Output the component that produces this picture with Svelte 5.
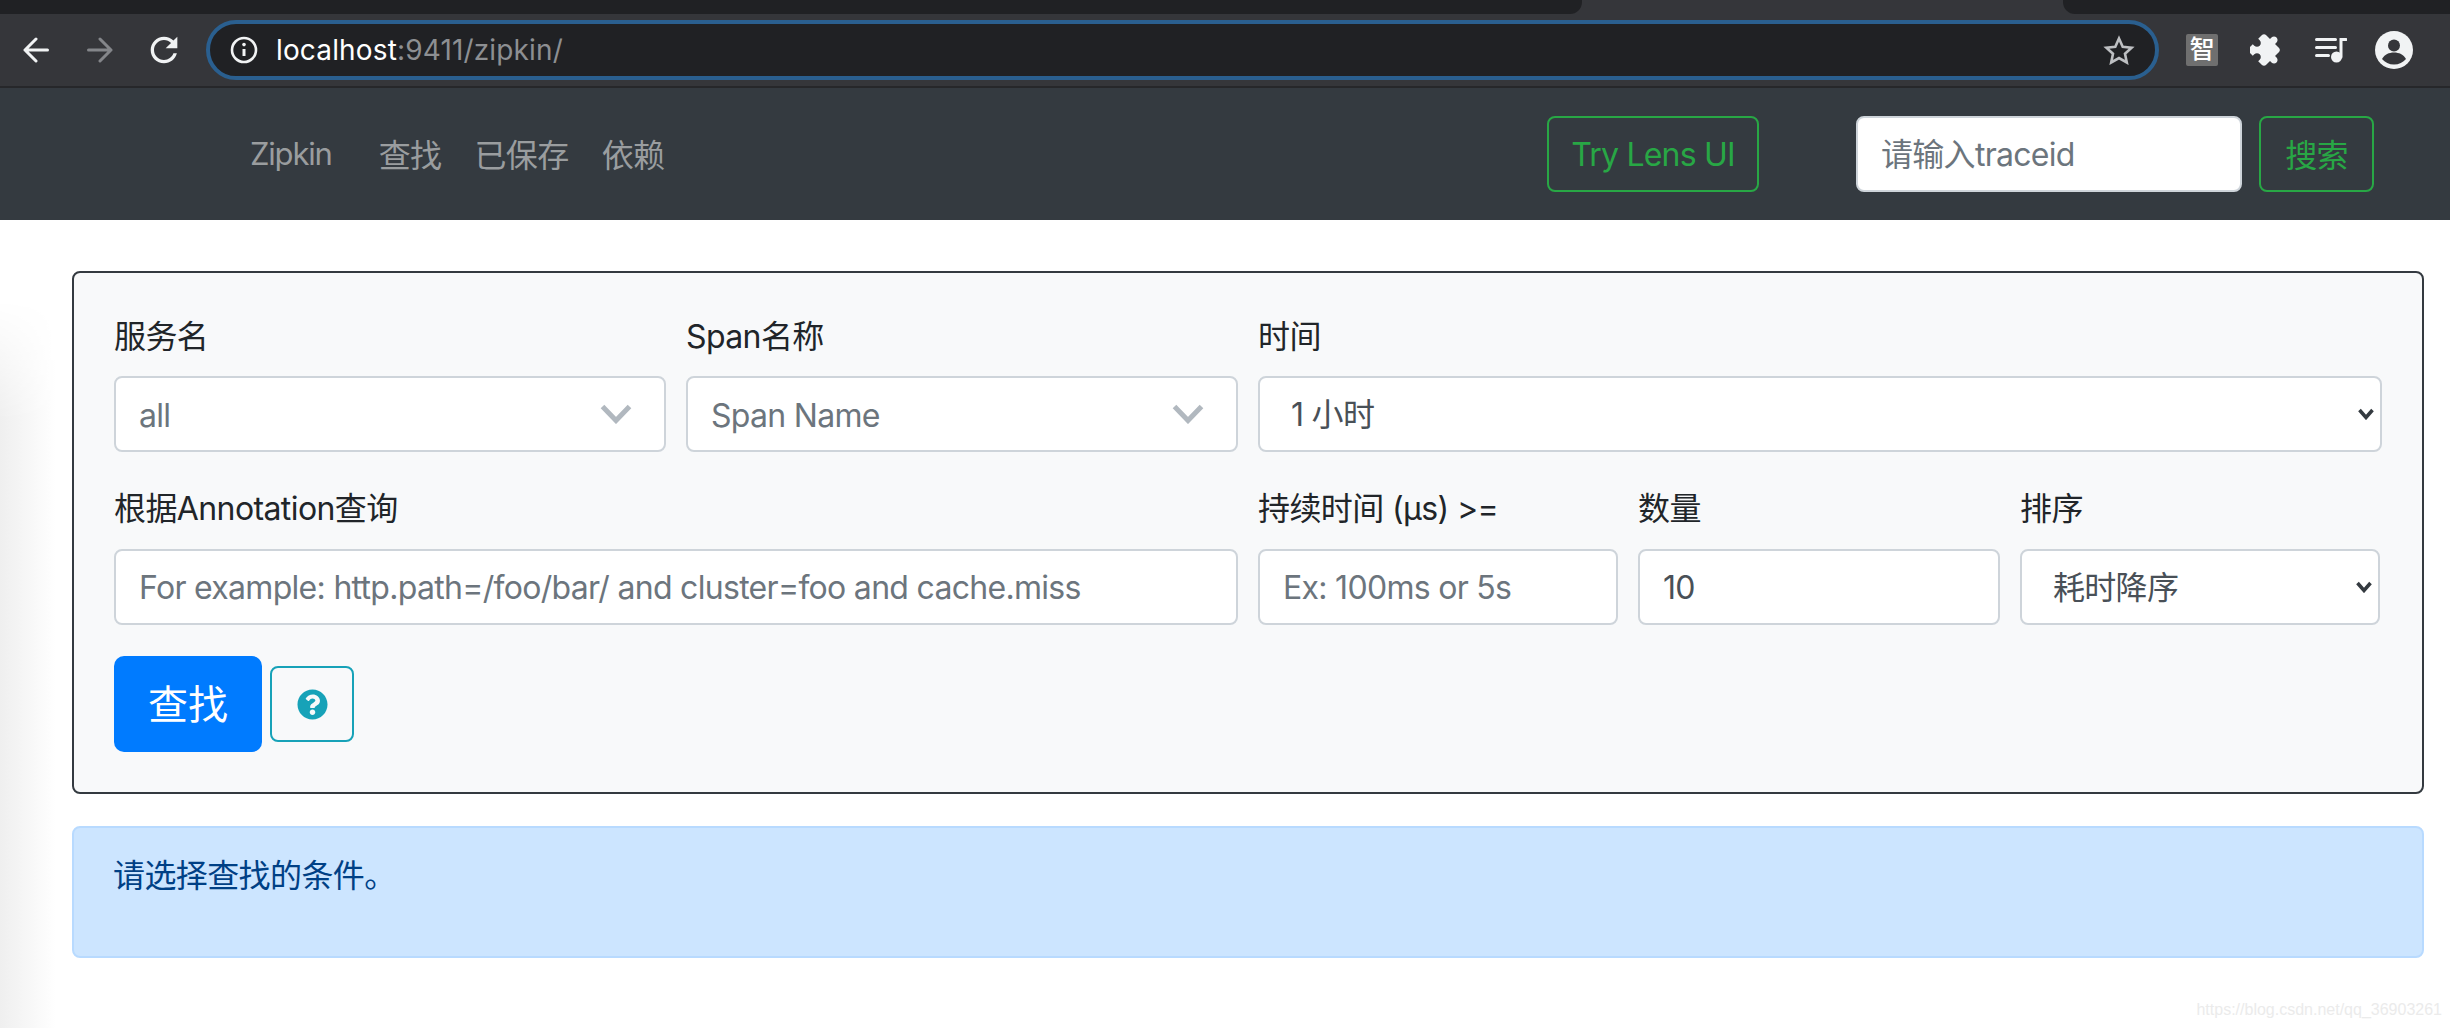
<!--
  Zipkin search page as seen inside a dark Chrome window.
-->
<script>
  const links = ['查找', '已保存', '依赖']
</script>

<div class="shade" aria-hidden="true"></div>

<div class="tabstrip">
  <div class="tab-dark left"></div>
  <div class="tab-dark right"></div>
</div>

<header class="toolbar">
  <svg class="tool back" width="26" height="26" viewBox="0 0 26 26" aria-hidden="true">
    <path d="M24.5 13H2M13 2 2 13l11 11" />
  </svg>
  <svg class="tool fwd" width="26" height="26" viewBox="0 0 26 26" aria-hidden="true">
    <path d="M1.5 13H24M13 2l11 11-11 11" />
  </svg>
  <svg class="reload" width="40" height="40" viewBox="0 0 24 24" aria-hidden="true">
    <path d="M17.65 6.35C16.2 4.9 14.21 4 12 4c-4.42 0-7.99 3.58-7.99 8s3.57 8 7.99 8c3.73 0 6.84-2.55 7.73-6h-2.08c-.82 2.33-3.04 4-5.65 4-3.31 0-6-2.69-6-6s2.69-6 6-6c1.66 0 3.14.69 4.22 1.78L13 11h7V4l-2.35 2.35z" />
  </svg>

  <div class="omnibox">
    <svg class="info" width="28" height="28" viewBox="0 0 28 28" aria-hidden="true">
      <circle cx="14" cy="14" r="12" />
      <path d="M14 13v7" />
      <circle class="dot" cx="14" cy="8.6" r="1.8" />
    </svg>
    <span class="url">localhost<span class="url-dim">:9411/zipkin/</span></span>
    <svg class="star" width="32" height="30" viewBox="0 0 32 30" aria-hidden="true">
      <path d="M16 3.5l3.7 8.2 8.9 1-6.6 6 1.8 8.8-7.8-4.5-7.8 4.5 1.8-8.8-6.6-6 8.9-1z" />
    </svg>
  </div>

  <div class="ext-zhi">智</div>
  <svg class="ext-puzzle" width="34" height="34" viewBox="0 0 24 24" aria-hidden="true">
    <path transform="rotate(45 12 12)" d="M20.5 11H19V7c0-1.1-.9-2-2-2h-4V3.5C13 2.12 11.88 1 10.5 1S8 2.12 8 3.5V5H4c-1.1 0-1.99.9-1.99 2v3.8H3.5c1.49 0 2.7 1.21 2.7 2.7s-1.21 2.7-2.7 2.7H2V20c0 1.1.9 2 2 2h3.8v-1.5c0-1.49 1.21-2.7 2.7-2.7 1.49 0 2.7 1.21 2.7 2.7V22H17c1.1 0 2-.9 2-2v-4h1.5c1.38 0 2.5-1.12 2.5-2.5S21.88 11 20.5 11z" />
  </svg>
  <svg class="ext-queue" width="32" height="26" viewBox="0 0 32 26" aria-hidden="true">
    <path class="lines" d="M1.5 2.5h19M1.5 10.500h19M1.500 18.500h12M26 20V2.500h5" />
    <circle cx="21.500" cy="20" r="5.500" />
  </svg>
  <svg class="avatar" width="38" height="38" viewBox="0 0 38 38" aria-hidden="true">
    <circle class="face" cx="19" cy="19" r="19" />
    <circle class="cut" cx="19" cy="14.500" r="6" />
    <path class="cut" d="M7 28c2.500-4.500 7-6.500 12-6.500S28.500 23.500 31 28c-3 3.500-7 5.500-12 5.500S10 31.500 7 28z" />
  </svg>
</header>

<nav class="navbar">
  <a class="brand" href="#top">Zipkin</a>
  <ul class="nav-links">
    {#each links as link}
      <li><a href="#top">{link}</a></li>
    {/each}
  </ul>
  <button type="button" class="btn-green lens">Try Lens UI</button>
  <input class="control trace" placeholder="请输入traceid" />
  <button type="button" class="btn-green go">搜索</button>
</nav>

<main class="page">
  <form class="card">
    <div class="row row-top">
      <div class="field">
        <span class="label">服务名</span>
        <div class="control picker">
          <span>all</span>
          <svg width="32" height="20" viewBox="0 0 32 20" aria-hidden="true"><path d="M2.500 2.500 16 16.500 29.500 2.500" /></svg>
        </div>
      </div>
      <div class="field">
        <span class="label">Span名称</span>
        <div class="control picker">
          <span>Span Name</span>
          <svg width="32" height="20" viewBox="0 0 32 20" aria-hidden="true"><path d="M2.500 2.500 16 16.500 29.500 2.500" /></svg>
        </div>
      </div>
      <div class="field">
        <span class="label">时间</span>
        <div class="select-wrap">
          <select class="control">
            <option>1 小时</option>
          </select>
          <svg class="caret" width="16" height="12" viewBox="0 0 16 12" aria-hidden="true"><path d="M1.500 2 8 9.500 14.500 2" /></svg>
        </div>
      </div>
    </div>

    <div class="row row-bottom">
      <div class="field">
        <span class="label">根据Annotation查询</span>
        <input class="control" placeholder="For example: http.path=/foo/bar/ and cluster=foo and cache.miss" />
      </div>
      <div class="field">
        <span class="label">持续时间 (μs) &gt;=</span>
        <input class="control" placeholder="Ex: 100ms or 5s" />
      </div>
      <div class="field">
        <span class="label">数量</span>
        <input class="control" value="10" />
      </div>
      <div class="field">
        <span class="label">排序</span>
        <div class="select-wrap">
          <select class="control">
            <option>耗时降序</option>
          </select>
          <svg class="caret" width="16" height="12" viewBox="0 0 16 12" aria-hidden="true"><path d="M1.500 2 8 9.500 14.500 2" /></svg>
        </div>
      </div>
    </div>

    <div class="actions">
      <button type="button" class="btn-find">查找</button>
      <button type="button" class="btn-help" aria-label="help">
        <svg width="31" height="31" viewBox="0 0 512 512" aria-hidden="true">
          <path d="M504 256c0 136.997-111.043 248-248 248S8 392.997 8 256C8 119.083 119.043 8 256 8s248 111.083 248 248zM262.655 90c-54.497 0-89.255 22.957-116.549 63.758-3.536 5.286-2.353 12.415 2.715 16.258l34.699 26.31c5.205 3.947 12.621 3.008 16.665-2.122 17.864-22.658 30.113-35.797 57.303-35.797 20.429 0 45.698 13.148 45.698 32.958 0 14.976-12.363 22.667-32.534 33.976C247.128 238.528 216 254.941 216 296v4c0 6.627 5.373 12 12 12h56c6.627 0 12-5.373 12-12v-1.333c0-28.462 83.186-29.647 83.186-106.667 0-58.002-60.165-102-116.531-102zM256 338c-25.365 0-46 20.635-46 46 0 25.364 20.635 46 46 46s46-20.636 46-46c0-25.365-20.635-46-46-46z" />
        </svg>
      </button>
    </div>
  </form>

  <div class="alert"><p>请选择查找的条件。</p></div>
</main>

<span class="watermark">https://blog.csdn.net/qq_36903261</span>

<style>
  :global(body) {
    margin: 0;
    background: #fff;
    font-family: Inter, "Noto Sans CJK SC", sans-serif;
    color: #212529;
    letter-spacing: -0.6px;
  }

  /* screenshot artefacts: soft window shadow at the left, blog watermark */
  .shade {
    position: absolute;
    left: 0;
    top: 300px;
    width: 56px;
    height: 728px;
    background: linear-gradient(to right, #efefef, #fff);
    -webkit-mask-image: linear-gradient(to bottom, transparent, #000 120px);
    mask-image: linear-gradient(to bottom, transparent, #000 120px);
  }
  .watermark {
    position: absolute;
    right: 8px;
    top: 1001px;
    font: 16px "Liberation Sans", sans-serif;
    letter-spacing: 0;
    color: #ebebeb;
  }

  .tabstrip {
    height: 14px;
    background: #35363a;
    display: flex;
    justify-content: space-between;
  }
  .tab-dark {
    height: 14px;
    background: #202124;
  }
  .tab-dark.left {
    width: 1582px;
    border-bottom-right-radius: 12px;
  }
  .tab-dark.right {
    width: 387px;
    border-bottom-left-radius: 12px;
  }

  .toolbar {
    height: 72px;
    background: #35363a;
    border-bottom: 2px solid #26272a;
    display: flex;
    align-items: center;
    padding-left: 23px;
  }
  .tool path {
    fill: none;
    stroke: #f1f3f4;
    stroke-width: 3;
    stroke-linecap: round;
    stroke-linejoin: round;
  }
  .fwd {
    margin-left: 38px;
  }
  .fwd path {
    stroke: #84868a;
  }
  .reload {
    margin-left: 31px;
    fill: #f1f3f4;
  }
  .omnibox {
    margin-left: 22px;
    margin-top: -1px;
    box-sizing: border-box;
    width: 1953px;
    height: 60px;
    border: 4px solid #2a5f8f;
    border-radius: 30px;
    background: #202124;
    display: flex;
    align-items: center;
    padding: 0 20px 0 20px;
  }
  .info circle {
    fill: none;
    stroke: #f1f3f4;
    stroke-width: 2.600;
  }
  .info circle.dot {
    fill: #f1f3f4;
    stroke: none;
  }
  .info path {
    stroke: #f1f3f4;
    stroke-width: 3;
  }
  .url {
    margin-left: 18px;
    font-size: 28px;
    color: #fff;
    letter-spacing: 0.15px;
  }
  .url-dim {
    color: #8d8f92;
  }
  .star {
    margin-left: auto;
    fill: none;
    stroke: #bdbfc2;
    stroke-width: 2.600;
  }
  .ext-zhi {
    margin-left: 27px;
    width: 32px;
    height: 32px;
    background: #6f6f6f;
    border-radius: 2px;
    color: #fff;
    font-size: 25px;
    line-height: 31px;
    text-align: center;
    font-weight: 500;
  }
  .ext-puzzle {
    margin-left: 32px;
    fill: #f1f3f4;
  }
  .ext-queue {
    margin-left: 31px;
    fill: #f1f3f4;
  }
  .ext-queue .lines {
    fill: none;
    stroke: #f1f3f4;
    stroke-width: 3;
    stroke-linecap: round;
  }
  .avatar {
    margin-left: 28px;
  }
  .avatar .face {
    fill: #f1f3f4;
  }
  .avatar .cut {
    fill: #35363a;
  }

  .navbar {
    height: 132px;
    background: #343a40;
    display: flex;
    align-items: center;
    padding: 0 76px 0 250px;
  }
  .navbar a {
    color: #9a9d9f;
    text-decoration: none;
    font-size: 31px;
    white-space: nowrap;
  }
  .brand {
    letter-spacing: -1.2px;
    margin-bottom: 2px;
  }
  .nav-links {
    list-style: none;
    display: flex;
    gap: 33px;
    margin: 0 0 3px 47px;
    padding: 0;
    flex: none;
  }
  .navbar .nav-links a {
    font-size: 32px;
  }
  .btn-green {
    box-sizing: border-box;
    height: 76px;
    border: 2px solid #28a745;
    border-radius: 8px;
    background: transparent;
    color: #28a745;
    font: inherit;
    font-size: 32px;
    letter-spacing: -0.8px;
    white-space: nowrap;
    padding: 0;
    flex: none;
  }
  .lens {
    margin-left: auto;
    width: 212px;
  }
  .go {
    margin-left: 17px;
    width: 115px;
    padding-bottom: 3px;
  }
  .control.trace {
    margin-left: 97px;
    width: 386px;
    flex: none;
  }

  .page {
    margin: 51px 26px 0 72px;
  }
  .card {
    box-sizing: border-box;
    height: 523px;
    background: #f8f9fa;
    border: 2px solid #343a40;
    border-radius: 8px;
    padding: 39px 40px 0;
  }
  .row {
    display: grid;
    column-gap: 20px;
  }
  .row-top {
    grid-template-columns: 552px 552px 1fr;
    margin-bottom: 33px;
  }
  .row-bottom {
    grid-template-columns: 1124px 360px 362px 360px;
    margin-bottom: 31px;
  }
  .field {
    display: flex;
    flex-direction: column;
    min-width: 0;
  }
  .label {
    font-size: 32px;
    line-height: 48px;
    margin-bottom: 16px;
    color: #212529;
  }
  .row-top .label {
    padding-top: 1px;
    margin-bottom: 15px;
  }
  .control {
    box-sizing: border-box;
    width: 100%;
    height: 76px;
    border: 2px solid #ced4da;
    border-radius: 8px;
    background: #fff;
    color: #495057;
    font: inherit;
    font-size: 32px;
    letter-spacing: -0.7px;
    padding: 0 23px;
    outline: none;
  }
  .control::placeholder {
    color: #6c757d;
    opacity: 1;
  }
  .picker {
    display: flex;
    align-items: center;
    justify-content: space-between;
    color: #6c757d;
    padding-right: 32px;
  }
  .picker span {
    padding-top: 3px;
  }
  .picker path {
    fill: none;
    stroke: #b1b8bf;
    stroke-width: 5;
  }
  .select-wrap {
    position: relative;
  }
  select.control {
    appearance: none;
    -webkit-appearance: none;
    padding-left: 31px;
  }
  .caret {
    position: absolute;
    right: 8px;
    top: 32px;
    fill: none;
    stroke: #343a40;
    stroke-width: 3.500;
  }

  .actions {
    display: flex;
    align-items: center;
    gap: 8px;
  }
  .btn-find {
    box-sizing: border-box;
    width: 148px;
    height: 96px;
    border: none;
    border-radius: 10px;
    background: #007bff;
    color: #fff;
    font: inherit;
    font-size: 40px;
    padding: 0 0 5px;
  }
  .btn-help {
    box-sizing: border-box;
    width: 84px;
    height: 76px;
    border: 2px solid #17a2b8;
    border-radius: 8px;
    background: transparent;
    padding: 0;
    display: flex;
    align-items: center;
    justify-content: center;
    fill: #17a2b8;
  }

  .alert {
    margin-top: 32px;
    box-sizing: border-box;
    height: 132px;
    background: #cce5ff;
    border: 2px solid #b8daff;
    border-radius: 8px;
    padding: 24px 39px;
    color: #004085;
    font-size: 32px;
    line-height: 48px;
  }
  .alert p {
    margin: 0;
  }
</style>
